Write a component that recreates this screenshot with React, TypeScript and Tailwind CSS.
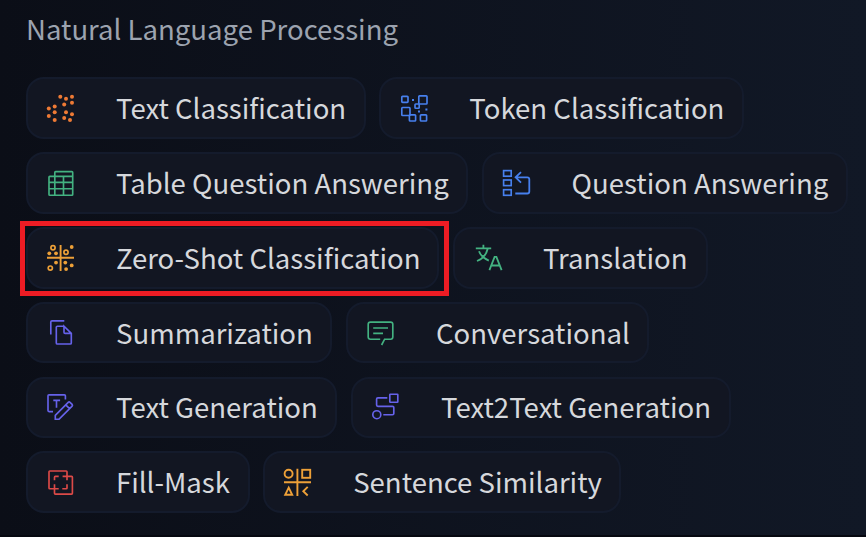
import type { ReactNode } from 'react'

type Task = {
  label: string
  width: string
  color: string
  icon: ReactNode
  highlighted?: boolean
}

const dots = (points: number[][], r: number) =>
  points.map(([cx, cy]) => <circle key={`${cx}-${cy}`} cx={cx} cy={cy} r={r} fill="currentColor" stroke="none" />)

const rows: Task[][] = [
  [
    {
      label: 'Text Classification',
      width: 'w-[339.7px]',
      color: 'text-[#ee7a35]',
      icon: dots(
        [[15.3, 3.8], [21, 5.8], [27, 3.8], [27, 9.7], [19.2, 11.6], [9.7, 13.4], [3.8, 15.4], [9.7, 19.3], [3.8, 23.1], [9.7, 27], [21, 19.3], [27, 21.2], [19.2, 25], [25, 27]],
        2,
      ),
    },
    {
      label: 'Token Classification',
      width: 'w-[364.7px]',
      color: 'text-[#4780ee]',
      icon: (
        <>
          <rect x="3.8" y="3.3" width="6.2" height="6" rx="0.8" />
          <rect x="20.8" y="2.8" width="8.2" height="8.2" rx="0.8" />
          <rect x="17" y="11" width="4.2" height="4.2" rx="0.8" />
          <rect x="3.8" y="14.5" width="8.2" height="8" rx="0.8" />
          <rect x="11.4" y="21.8" width="6.2" height="6.2" rx="0.8" />
          <rect x="22.4" y="21.8" width="6.2" height="6.2" rx="0.8" />
          <path d="M14 7h2M27.4 16.4h2M20 18.6h2" strokeWidth="2" />
        </>
      ),
    },
  ],
  [
    {
      label: 'Table Question Answering',
      width: 'w-[442px]',
      color: 'text-[#43b281]',
      icon: (
        <path d="M9.8 27.2V4.4q0-.8.8-.8h16.3q.8 0 .8.8v22q0 .8-.8.8H4.8q-.8 0-.8-.8V9.1q0-.8.8-.8h22.9M4 14.4h23.7M4 20.7h23.7M18.5 8.3v18.9" />
      ),
    },
    {
      label: 'Question Answering',
      width: 'w-[366px]',
      color: 'text-[#4780ee]',
      icon: (
        <>
          <rect x="2.6" y="2.6" width="7.6" height="5.6" />
          <rect x="2.6" y="12" width="7.6" height="5.6" />
          <rect x="2.6" y="21.7" width="7.6" height="5.6" />
          <path d="M14.3 25.5h12q2 0 2-2V11.3q0-2-2-2H14.8M20 4.2l-5.4 5.1 5.4 5.3" strokeWidth="1.8" />
        </>
      ),
    },
  ],
  [
    {
      label: 'Zero-Shot Classification',
      width: 'w-[413.4px]',
      color: 'text-[#eda038]',
      highlighted: true,
      icon: (
        <>
          <path d="M15.6 2v26M2 14.8h27" strokeWidth="1.9" />
          <circle cx="8" cy="4.8" r="2.1" strokeWidth="1.7" />
          <circle cx="21" cy="9.3" r="2.1" strokeWidth="1.7" />
          <circle cx="5.3" cy="25.1" r="2.1" strokeWidth="1.7" />
          {dots([[4.3, 10.3], [11, 10.3], [26.7, 4], [11, 19.6], [20.3, 19.6], [26.7, 22.4], [21.1, 26.1]], 1.9)}
        </>
      ),
    },
    {
      label: 'Translation',
      width: 'w-[255px]',
      color: 'text-[#43b281]',
      icon: (
        <>
          <path d="M11.4 1.8v3.6M3.8 5.4h15.4M15.7 5.8Q13.6 14.6 5 18M7 8.2q2.3 6 9.8 9.4" strokeWidth="1.8" />
          <path d="M17.4 27.2 22.6 13.8h1.8l5.2 13.4M19.3 22.5h8.4" strokeWidth="1.8" />
        </>
      ),
    },
  ],
  [
    {
      label: 'Summarization',
      width: 'w-[306.4px]',
      color: 'text-[#6662ea]',
      icon: (
        <path d="M19.3 2.8H7q-1.2 0-1.2 1.2v12.4M19 8.2h-6.6q-1.1 0-1.1 1.1v15.6q0 1.1 1.1 1.1h12.8q1.1 0 1.1-1.1V15.3L19 8.2v6q0 1.1 1.1 1.1h6.2" />
      ),
    },
    {
      label: 'Conversational',
      width: 'w-[303px]',
      color: 'text-[#43b281]',
      icon: (
        <path d="M15.2 21.2H5.4q-2.2 0-2.2-2.2V6.3q0-2.2 2.2-2.2h20.2q2.2 0 2.2 2.2V19q0 2.2-2.2 2.2h-6L16.6 27M8.2 10h14.8M8.2 15.4h9.8" />
      ),
    },
  ],
  [
    {
      label: 'Text Generation',
      width: 'w-[311.4px]',
      color: 'text-[#6662ea]',
      icon: (
        <>
          <path d="M8 19.6H4q-1 0-1-1V3.8q0-1 1-1h15.4q1 0 1 1v3.6M8.3 8.4h6.8M11.5 8.4v7.4" />
          <path d="M10.3 27.2v-3.8L23.2 10.3q.9-.8 1.8 0l2.1 2.1q.8.9 0 1.8L14.1 27.2zM20.7 12.8l3.9 3.9" />
        </>
      ),
    },
    {
      label: 'Text2Text Generation',
      width: 'w-[380px]',
      color: 'text-[#6662ea]',
      icon: (
        <>
          <rect x="19.8" y="2.2" width="8" height="8" rx="0.5" />
          <circle cx="6.8" cy="22.7" r="4" />
          <path d="M17.3 5.8H7.9q-1.3 0-1.3 1.3V13q0 1.3 1.3 1.3h14.6q1.3 0 1.3 1.3v5.8q0 1.3-1.3 1.3h-9.2" />
        </>
      ),
    },
  ],
  [
    {
      label: 'Fill-Mask',
      width: 'w-[223.6px]',
      color: 'text-[#dc4a48]',
      icon: (
        <>
          <path d="M22 13.3V4.8q0-.8-.8-.8H4.8q-.8 0-.8.8v16.1q0 .8.8.8h8.9" />
          <path d="M9.5 17.3v9q0 .8.8.8h16.3q.8 0 .8-.8V10.2q0-.8-.8-.8h-9" />
          <path d="M13.7 9.4h-3.4q-.8 0-.8.8v3.1M17.3 21.7h3.9q.8 0 .8-.8v-3.6" />
        </>
      ),
    },
    {
      label: 'Sentence Similarity',
      width: 'w-[358px]',
      color: 'text-[#eda038]',
      icon: (
        <>
          <path d="M15.4 1.8V29M2 15.3h27" strokeWidth="1.9" />
          <circle cx="6.6" cy="6.8" r="4" strokeWidth="1.9" />
          <rect x="20.2" y="2.8" width="8" height="8" strokeWidth="1.9" />
          <path d="M6.7 20.6 3.2 27.8h7zM25.7 19.9l-4.4 4.4 4.4 4.2" strokeWidth="1.9" />
        </>
      ),
    },
  ],
]

function TaskChip({ label, width, color, icon, highlighted }: Task) {
  return (
    <a className={`relative flex h-[61.6px] shrink-0 items-center rounded-[18px] border-2 border-[#141b2c] bg-[#121622] pl-[17px] ${width}`}>
      <svg
        className={`mt-[2px] h-8 w-8 shrink-0 ${color}`}
        viewBox="0 0 32 32"
        fill="none"
        stroke="currentColor"
        strokeWidth="1.65"
      >
        {icon}
      </svg>
      <span className="mb-[2px] ml-[39px] text-[27.56px] leading-[40px] whitespace-nowrap text-[#d6d8dc]">{label}</span>
      {highlighted && <span className="absolute -top-2 -right-[12px] -bottom-[9.4px] -left-2 border-5 border-[#ed1c24]" />}
    </a>
  )
}

export default function App() {
  return (
    <div className="h-[537px] w-[866px] overflow-hidden border-b-2 border-[#060810] bg-linear-to-r from-[#0b0e17] to-[#111826] pl-[26px] font-['Noto_Sans_CJK_SC',sans-serif]">
      <h3 className="h-[77.4px] pt-[8px] text-[27.56px] leading-[40px] text-[#9ca3af]">Natural Language Processing</h3>
      <div className="flex flex-col gap-[13.2px]">
        {rows.map((row, i) => (
          <div key={i} className="flex gap-[13.6px]">
            {row.map((task) => (
              <TaskChip key={task.label} {...task} />
            ))}
          </div>
        ))}
      </div>
    </div>
  )
}
